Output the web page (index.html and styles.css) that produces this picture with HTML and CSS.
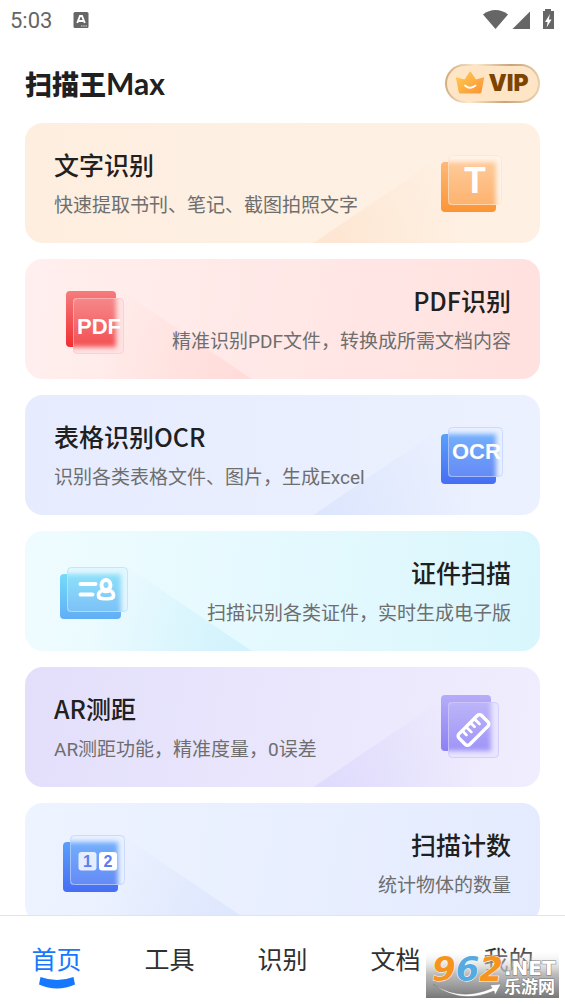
FILE: index.html
```html
<!DOCTYPE html>
<html lang="zh-CN">
<head>
<meta charset="utf-8">
<meta name="viewport" content="width=device-width, initial-scale=1">
<title>扫描王Max</title>
<link rel="stylesheet" href="styles.css">
</head>
<body>
<div class="status">
  <span class="status-left">
    <time class="clock">5:03</time>
    <svg class="ime" viewBox="0 0 16 18" aria-hidden="true"><rect x="0.500" y="1" width="15" height="16" rx="1.500" fill="#666"/><path d="M4.200 12 7 5h2l2.800 7M5.300 10h5.400" fill="none" stroke="#fff" stroke-width="1.900"/><path d="M8 15h6" stroke="#ddd" stroke-width="1.200" stroke-dasharray="1.500 .7"/></svg>
  </span>
  <svg class="signals" viewBox="0 0 72 22" aria-hidden="true">
    <g fill="#666"><path d="M0 5.500C7-.5 18-.5 25 5.500L12.500 20z"/><path d="M29.500 20 47 2.500V20z"/><path d="M62 0h6v2h3V20H60V2h2z"/></g>
    <path d="m67 5-5 8h2.600l-1 5.500 5-8h-2.800z" fill="#fff"/>
  </svg>
</div>

<header class="header">
  <h1 class="brand">扫描王<span class="brand-latin">Max</span></h1>
  <button class="vip" type="button">
    <svg class="crown" viewBox="0 0 28 24" aria-hidden="true">
      <defs><linearGradient id="crown" x1="0" y1="0" x2="1" y2="1"><stop offset="0" stop-color="#ffce50"/><stop offset="1" stop-color="#f99238"/></linearGradient></defs>
      <path d="M0 7q0-1 1-.5L8.500 8.500l5-7.500q.7-1 1.400 0l5 7.500L27 6.500q1.500-.5 1 .7L25.500 21q-.3 1.500-1.800 1.500H4.500q-1.500 0-1.800-1.500z" fill="url(#crown)"/>
      <path d="M9 14.500q5 4.500 10.500 0" fill="none" stroke="#fff" stroke-width="1.800" stroke-linecap="round"/>
    </svg>
    <span>VIP</span>
  </button>
</header>

<main class="cards">
  <a class="card orange" href="#text">
    <span class="copy"><strong class="title">文字识别</strong><span class="desc">快速提取书刊、笔记、截图拍照文字</span></span>
    <svg class="icon" viewBox="0 0 68 64" aria-hidden="true">
      <defs>
        <linearGradient id="g1" x2="0" y2="1"><stop stop-color="#ffb878"/><stop offset="1" stop-color="#fb9535"/></linearGradient>
        <clipPath id="c1"><rect x="11" y="4" width="54" height="50" rx="4"/></clipPath>
        <filter id="blur" x="-20%" y="-20%" width="140%" height="140%"><feGaussianBlur stdDeviation="2.500"/></filter>
      </defs>
      <rect x="4" y="11" width="55" height="50" rx="4" fill="url(#g1)"/>
      <g clip-path="url(#c1)"><rect x="11" y="4" width="54" height="50" fill="#fff0e2"/><rect x="4" y="11" width="55" height="50" fill="url(#g1)" filter="url(#blur)"/><rect x="11" y="4" width="54" height="50" fill="#fff" opacity=".25"/></g>
      <rect x="11.500" y="4.500" width="53" height="49" rx="4" fill="none" stroke="#ffe3c8" stroke-opacity=".7"/>
      <text class="glyph-t" x="38" y="42" text-anchor="middle">T</text>
    </svg>
  </a>

  <a class="card red flip" href="#pdf">
    <span class="copy"><strong class="title">PDF识别</strong><span class="desc">精准识别PDF文件，转换成所需文档内容</span></span>
    <svg class="icon" viewBox="0 0 68 64" aria-hidden="true">
      <defs>
        <linearGradient id="g2" x2="0" y2="1"><stop stop-color="#f57c7e"/><stop offset="1" stop-color="#f02e32"/></linearGradient>
        <clipPath id="c2"><rect x="13" y="11" width="51" height="56" rx="4"/></clipPath>
      </defs>
      <rect x="6" y="4" width="50" height="56" rx="4" fill="url(#g2)"/>
      <g clip-path="url(#c2)"><rect x="13" y="11" width="51" height="56" fill="#fddedd"/><rect x="6" y="4" width="50" height="56" fill="url(#g2)" filter="url(#blur)"/><rect x="13" y="11" width="51" height="56" fill="#fff" opacity=".16"/></g>
      <rect x="13.500" y="11.500" width="50" height="55" rx="4" fill="none" stroke="#ffc5c4" stroke-opacity=".6"/>
      <text class="glyph-word" x="17" y="47">PDF</text>
    </svg>
  </a>

  <a class="card blue" href="#ocr">
    <span class="copy"><strong class="title">表格识别OCR</strong><span class="desc">识别各类表格文件、图片，生成Excel</span></span>
    <svg class="icon" viewBox="0 0 68 64" aria-hidden="true">
      <defs>
        <linearGradient id="g3" x2="0" y2="1"><stop stop-color="#58a0fc"/><stop offset="1" stop-color="#476df3"/></linearGradient>
        <clipPath id="c3"><rect x="11" y="4" width="55" height="50" rx="4"/></clipPath>
      </defs>
      <rect x="4" y="11" width="55" height="50" rx="4" fill="url(#g3)"/>
      <g clip-path="url(#c3)"><rect x="11" y="4" width="55" height="50" fill="#e6eeff"/><rect x="4" y="11" width="55" height="50" fill="url(#g3)" filter="url(#blur)"/><rect x="11" y="4" width="55" height="50" fill="#fff" opacity=".16"/></g>
      <rect x="11.500" y="4.500" width="54" height="49" rx="4" fill="none" stroke="#bdd2fc" stroke-opacity=".7"/>
      <text class="glyph-word" x="15" y="36">OCR</text>
    </svg>
  </a>

  <a class="card cyan flip" href="#id">
    <span class="copy"><strong class="title">证件扫描</strong><span class="desc">扫描识别各类证件，实时生成电子版</span></span>
    <svg class="icon" viewBox="0 0 68 64" aria-hidden="true">
      <defs>
        <linearGradient id="g4" x2="0" y2="1"><stop stop-color="#75dbf9"/><stop offset="1" stop-color="#61aef5"/></linearGradient>
        <clipPath id="c4"><rect x="7" y="8" width="61" height="45" rx="4"/></clipPath>
      </defs>
      <rect x="0" y="15" width="61" height="45" rx="4" fill="url(#g4)"/>
      <g clip-path="url(#c4)"><rect x="7" y="8" width="61" height="45" fill="#def6ff"/><rect x="0" y="15" width="61" height="45" fill="url(#g4)" filter="url(#blur)"/><rect x="7" y="8" width="61" height="45" fill="#fff" opacity=".16"/></g>
      <rect x="7.500" y="8.500" width="60" height="44" rx="4" fill="none" stroke="#b5e4fb" stroke-opacity=".8"/>
      <g fill="none" stroke="#fff" stroke-width="4" stroke-linecap="round"><path d="M20.500 25h15M20.500 35.500h12"/><ellipse cx="46" cy="26" rx="4.500" ry="5"/><path d="M42 31.500c-5 2.500-4.500 8 0 8q4 .6 8 0c4.500 0 5-5.500 0-8q-4 2-8 0z" stroke-linejoin="round" stroke-width="3.600"/></g>
    </svg>
  </a>

  <a class="card purple" href="#ar">
    <span class="copy"><strong class="title">AR测距</strong><span class="desc">AR测距功能，精准度量，0误差</span></span>
    <svg class="icon" viewBox="0 0 68 64" aria-hidden="true">
      <defs>
        <linearGradient id="g5" x2="0" y2="1"><stop stop-color="#b5adf8"/><stop offset="1" stop-color="#8c80f5"/></linearGradient>
        <clipPath id="c5"><rect x="11" y="7" width="51" height="56" rx="4"/></clipPath>
      </defs>
      <rect x="4" y="0" width="50" height="56" rx="4" fill="url(#g5)"/>
      <g clip-path="url(#c5)"><rect x="11" y="7" width="51" height="56" fill="#e5e1fe"/><rect x="4" y="0" width="50" height="56" fill="url(#g5)" filter="url(#blur)"/><rect x="11" y="7" width="51" height="56" fill="#fff" opacity=".16"/></g>
      <rect x="11.500" y="7.500" width="50" height="55" rx="4" fill="none" stroke="#d0c9fd" stroke-opacity=".8"/>
      <g transform="translate(36.500 35) rotate(-45)" fill="none" stroke="#fff" stroke-width="3.400" stroke-linecap="round" stroke-linejoin="round"><rect x="-16" y="-7.500" width="32" height="15" rx="3"/><path d="M-8.500-7v5.500M-3-7v7M3-7v5.500M8.500-7v7" stroke-width="2.800"/></g>
    </svg>
  </a>

  <a class="card indigo flip" href="#count">
    <span class="copy"><strong class="title">扫描计数</strong><span class="desc">统计物体的数量</span></span>
    <svg class="icon" viewBox="0 0 68 64" aria-hidden="true">
      <defs>
        <clipPath id="c6"><rect x="10" y="4" width="55" height="50" rx="4"/></clipPath>
      </defs>
      <rect x="3" y="11" width="55" height="50" rx="4" fill="url(#g3)"/>
      <g clip-path="url(#c6)"><rect x="10" y="4" width="55" height="50" fill="#e6eeff"/><rect x="3" y="11" width="55" height="50" fill="url(#g3)" filter="url(#blur)"/><rect x="10" y="4" width="55" height="50" fill="#fff" opacity=".16"/></g>
      <rect x="10.500" y="4.500" width="54" height="49" rx="4" fill="none" stroke="#bdd2fc" stroke-opacity=".7"/>
      <rect x="18.500" y="21" width="18" height="18.500" rx="3" fill="#fff" opacity=".82"/><rect x="39" y="21" width="18" height="18.500" rx="3" fill="#fff"/>
      <text class="glyph-num" x="27.500" y="36" text-anchor="middle">1</text><text class="glyph-num" x="48" y="36" text-anchor="middle">2</text>
    </svg>
  </a>
</main>

<nav class="tabs">
  <a class="tab active" href="#home" aria-current="page">首页<svg class="smile" viewBox="0 0 36 12" aria-hidden="true"><path d="M1.500 0Q18 6 34.500 0L36 7.500Q18 15.500 0 7.500z" fill="#1677ff"/></svg></a>
  <a class="tab" href="#tools">工具</a>
  <a class="tab" href="#scan">识别</a>
  <a class="tab" href="#docs">文档</a>
  <a class="tab" href="#me">我的</a>
</nav>

<svg class="watermark" viewBox="0 0 133 48" role="img" aria-label="962.NET 乐游网">
  <defs><linearGradient id="wm" x2="0" y2="1"><stop stop-color="#fff" stop-opacity=".1"/><stop offset=".5" stop-color="#b5b5b5" stop-opacity=".9"/><stop offset="1" stop-color="#777"/></linearGradient></defs>
  <rect width="133" height="48" fill="url(#wm)"/>
  <text class="wm-num" x="6" y="31"><tspan fill="#f7941e">9</tspan><tspan fill="#55aadf">6</tspan><tspan fill="#f7941e">2</tspan></text>
  <text class="wm-net" x="78" y="25">.NET</text>
  <path d="M7 34Q35 52 66 38L64 35 75 34 69 45 68 41Q34 55 7 34z" fill="#fff" stroke="#777" stroke-width=".5"/>
  <text class="wm-cn" x="78" y="43">乐游网</text>
</svg>
</body>
</html>
```
FILE: styles.css
```css
* {
  box-sizing: border-box;
}

body {
  display: flex;
  flex-direction: column;
  height: 100vh;
  margin: 0;
  background: #fff;
  color: #202020;
  font-family: Roboto, "Noto Sans CJK SC", sans-serif;
  overflow: hidden;
  position: relative;
}

a {
  color: inherit;
  text-decoration: none;
}

.status {
  display: flex;
  flex: none;
  align-items: center;
  justify-content: space-between;
  height: 40px;
  padding: 0 10px;
  color: #666;
}

.status-left {
  display: flex;
  align-items: center;
  gap: 21px;
}

.clock {
  font-size: 22px;
}

.ime {
  width: 16px;
  height: 18px;
}

.signals {
  width: 72px;
  height: 22px;
}

.header {
  display: flex;
  flex: none;
  align-items: center;
  justify-content: space-between;
  height: 83px;
  padding: 3px 25px 0;
}

.brand {
  margin: 0;
  font: 900 27px/40px "Noto Sans CJK SC", sans-serif;
}

.brand-latin {
  font-family: Lato, sans-serif;
  font-size: 30px;
  font-weight: 700;
}

.vip {
  display: flex;
  align-items: center;
  justify-content: center;
  gap: 4px;
  width: 95px;
  height: 39px;
  padding: 0;
  border: 2px solid transparent;
  border-radius: 20px;
  background:
    linear-gradient(#fee5c5, #fee5c5) padding-box,
    linear-gradient(100deg, #cba474, #fbe9cf 30%, #c8a47a 65%, #ecd5b3) border-box;
  color: #7d4400;
  font: 900 23px/24px Inter, sans-serif;
}

.crown {
  width: 28px;
  height: 24px;
}

.cards {
  display: flex;
  flex: 1;
  flex-direction: column;
  gap: 16px;
  min-height: 0;
  padding: 0 25px;
  overflow: hidden;
}

.card {
  position: relative;
  display: flex;
  flex: none;
  align-items: center;
  justify-content: space-between;
  min-height: 120px;
  padding: 0 29px;
  border-radius: 18px;
}

.card::before {
  position: absolute;
  inset: 0;
  border-radius: inherit;
  background: radial-gradient(circle at 58% 100%, var(--shade), transparent 150px);
  clip-path: polygon(56% 100%, 100% -28%, 100% 100%);
  content: "";
}

.flip {
  flex-direction: row-reverse;
  text-align: right;
}

.flip::before {
  transform: scaleX(-1);
}

.orange { --shade: #fde6d2; background: linear-gradient(90deg, #fdeee0, #fef1e4); }
.red { --shade: #ffdcd9; background: linear-gradient(100deg, #ffefee, #ffe1df); }
.blue { --shade: #dce6fd; background: linear-gradient(90deg, #e6ecfe, #ecf1ff); }
.cyan { --shade: #d2f2fc; background: linear-gradient(100deg, #effcff, #d9f6fd); }
.purple { --shade: #dfdbfc; background: linear-gradient(100deg, #e3dffb, #f0edfe); }
.indigo { --shade: #dce6fd; background: linear-gradient(100deg, #edf3ff, #e4ebfe); }

.copy {
  position: relative;
  display: grid;
  gap: 14px;
}

.title {
  font: 500 25px/32px "Noto Sans CJK SC", sans-serif;
}

.desc {
  color: #6e6e6e;
  font-size: 19px;
  font-weight: 400;
  line-height: 24px;
  white-space: nowrap;
}

.icon {
  position: relative;
  width: 68px;
  height: 64px;
  margin: 0 6px;
  overflow: visible;
}

.icon text {
  fill: #fff;
  font-family: "Liberation Sans", sans-serif;
  font-weight: 700;
}

.icon .glyph-t { font-family: Roboto, sans-serif; font-size: 36px; }
.icon .glyph-word { font-size: 22px; }
.icon .glyph-num { fill: #5b7fee; font-size: 16px; }

.tabs {
  display: grid;
  flex: none;
  grid-template-columns: repeat(5, 1fr);
  height: 89px;
  border-top: 1px solid #e2e4e8;
  background: #fff;
}

.tab {
  display: flex;
  flex-direction: column;
  align-items: center;
  padding-top: 27px;
  color: #303030;
  font-size: 25px;
  line-height: 36px;
}

.active {
  color: #1677ff;
}

.smile {
  width: 36px;
  height: 12px;
  margin-top: -2px;
}

.watermark {
  position: absolute;
  right: 6px;
  bottom: 6px;
  width: 133px;
  height: 48px;
}

.wm-num {
  font: italic 700 34px "DejaVu Sans", sans-serif;
  stroke: #fff;
  stroke-width: 1px;
  paint-order: stroke;
}

.wm-net {
  fill: #fff;
  stroke: #777;
  stroke-width: 1px;
  paint-order: stroke;
  font: 700 20px "DejaVu Sans", sans-serif;
}

.wm-cn {
  fill: #fff;
  stroke: #777;
  stroke-width: 1px;
  paint-order: stroke;
  font: 700 17px "Noto Sans CJK SC", sans-serif;
}
```
